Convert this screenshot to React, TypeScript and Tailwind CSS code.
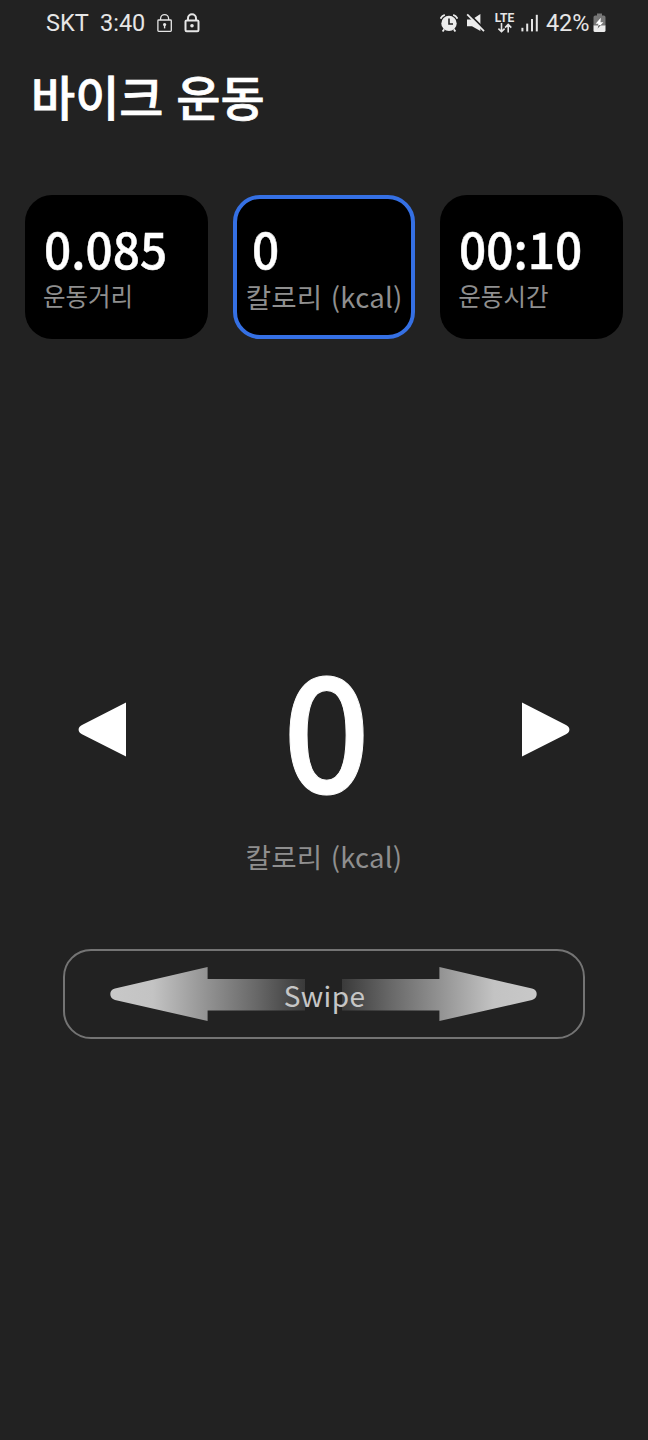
import React from "react";

type Metric = { value: string; label: string; active?: boolean };

const metrics: Metric[] = [
  { value: "0.085", label: "운동거리" },
  { value: "0", label: "칼로리 (kcal)", active: true },
  { value: "00:10", label: "운동시간" },
];

function StatusBar() {
  return (
    <header className="flex h-[46px] shrink-0 items-center justify-between pl-[46px] pr-[42px] font-['Roboto',sans-serif] text-[23.5px] leading-[46px] text-[#e6e6e6]">
      <div className="flex items-center">
        <span className="w-[54px]">SKT</span>
        <span className="w-[57px]">3:40</span>
        <svg className="h-[20px] w-[16px]" viewBox="0 0 16 20" fill="none" stroke="#e6e6e6" strokeWidth="1.3">
          <rect x="0.9" y="7" width="13.4" height="11.3" rx="0.8" />
          <path d="M3.6 7V5.6a4 4 0 0 1 8 0V7" />
          <circle cx="7.6" cy="11.5" r="1.6" fill="#e6e6e6" stroke="none" />
          <path d="M7.6 12v3.4" strokeWidth="1.4" />
        </svg>
        <svg className="ml-[11px] h-[20px] w-[17px]" viewBox="0 0 17 20" fill="none" stroke="#e6e6e6" strokeWidth="2">
          <rect x="1.5" y="7.4" width="13" height="10.8" rx="1.2" />
          <path d="M4 7.4V5.2a4 4 0 0 1 8 0v2.2" />
          <circle cx="8" cy="12.7" r="1.8" fill="#e6e6e6" stroke="none" />
        </svg>
      </div>
      <div className="flex items-center">
        <svg className="h-[20px] w-[18px]" viewBox="0 0 18 20">
          <circle cx="9" cy="10.4" r="7.7" fill="#ececec" />
          <path d="M.6 5.6Q1.6 2.8 4.8 1.8M17.4 5.6Q16.4 2.8 13.2 1.8M4.2 16.2 2.6 18.5M13.8 16.2 15.4 18.5" fill="none" stroke="#ececec" strokeWidth="1.8" />
          <path d="M9 5.6v5.4h4" fill="none" stroke="#222" strokeWidth="1.6" />
        </svg>
        <svg className="ml-[8px] h-[20px] w-[20px]" viewBox="0 0 20 20">
          <path d="M1 6.6h5L14.4 1v17L6 13.2H1z" fill="#ececec" />
          <path d="M2.4 0.2 19.6 17.4" stroke="#222" strokeWidth="2" />
          <path d="M1.2 1.4 18 18.2" stroke="#ececec" strokeWidth="1.8" />
        </svg>
        <div className="ml-[8px] flex w-[21px] flex-col items-center">
          <span className="text-[12px] font-bold leading-[10px]">LTE</span>
          <svg className="h-[10px] w-[16px]" viewBox="0 0 16 10" fill="none" stroke="#e6e6e6" strokeWidth="1.6">
            <path d="M4.5 0v8.6M1.4 5.6l3.1 3.1 3.1-3.1M11.2 9.6V1.6M8.1 4.6l3.1-3.1 3.1 3.1" />
          </svg>
        </div>
        <svg className="ml-[6px] h-[18px] w-[18px]" viewBox="0 0 18 18" fill="#e6e6e6">
          <rect x="0.4" y="13.8" width="2" height="3.6" />
          <rect x="5.2" y="9.6" width="2" height="7.8" />
          <rect x="10" y="5" width="2" height="12.4" />
          <rect x="14.8" y="0.8" width="2" height="16.6" />
        </svg>
        <span className="ml-[7px] w-[47px] tracking-[-0.1px]">42%</span>
        <svg className="h-[20px] w-[13px]" viewBox="0 0 13 20">
          <path d="M4 0.6h5v2h1.8q1.7 0 1.7 1.7V13H0.5V4.3q0-1.7 1.7-1.7H4z" fill="#777" />
          <path d="M0.5 12.5h12v5q0 1.6-1.6 1.6H2.1q-1.6 0-1.6-1.6z" fill="#ececec" />
          <path d="M7.8 4.8 2.6 10.8h2.8L4.4 15.6l6-6.3H7.5z" fill="#fff" />
          <path d="M5.6 12.3 4.6 15.4 7.7 12.3" fill="#444" />
        </svg>
      </div>
    </header>
  );
}

function MetricCard({ value, label, active }: Metric) {
  return (
    <div
      className={
        active
          ? "h-[144px] rounded-[27px] border-4 border-[#3570e4] bg-black pl-[9px] pt-[23px]"
          : "h-[144px] rounded-[27px] bg-black pl-[18px] pt-[27px]"
      }
    >
      <div
        className={
          active
            ? "ml-[6px] h-[59px] origin-left scale-x-[0.955] text-[50px] font-medium leading-[50px] text-white [-webkit-text-stroke:0.5px_white]"
            : "ml-[1px] h-[59px] origin-left scale-x-[0.955] text-[50px] font-medium leading-[50px] text-white [-webkit-text-stroke:0.5px_white]"
        }
      >
        {value}
      </div>
      <div className={active ? "whitespace-nowrap text-[27.6px] leading-[30px] tracking-[0.2px] text-[#8f8f8f] [word-spacing:2px]" : "whitespace-nowrap text-[24.5px] leading-[30px] text-[#8f8f8f]"}>
        {label}
      </div>
    </div>
  );
}

function Triangle({ flip }: { flip?: boolean }) {
  return (
    <svg className={flip ? "h-[56px] w-[48px] -scale-x-100" : "h-[56px] w-[48px]"} viewBox="0 0 48 56" fill="#fff">
      <path d="M48 .6V54.6L4 32.2Q.6 30.6 .6 27.6T4 23Z" />
    </svg>
  );
}

function SwipeArrow({ id, flip }: { id: string; flip?: boolean }) {
  return (
    <svg className={flip ? "h-[56px] w-[195px] -scale-x-100" : "h-[56px] w-[195px]"} viewBox="0 0 195 56">
      <defs>
        <linearGradient id={id} x1="0" x2="195" y1="0" y2="0" gradientUnits="userSpaceOnUse">
          <stop offset="0" stopColor="#c8c8c8" />
          <stop offset="0.22" stopColor="#c3c3c3" />
          <stop offset="0.5" stopColor="#929292" />
          <stop offset="0.75" stopColor="#686868" />
          <stop offset="1" stopColor="#3a3a3a" />
        </linearGradient>
      </defs>
      <path d="M97.6 1V13H195V44.5H97.6V55L5 34Q.3 32.5 .3 28T5 22.5Z" fill={`url(#${id})`} />
    </svg>
  );
}

export default function App() {
  return (
    <main className="flex h-[1440px] w-[648px] flex-col overflow-hidden bg-[#222222] font-['Noto_Sans_CJK_KR',sans-serif]">
      <StatusBar />
      <h1 className="mt-[25px] pl-[31px] text-[48px] font-medium leading-[48px] text-white [-webkit-text-stroke:0.7px_white] [word-spacing:2px]">바이크 운동</h1>
      <section className="mt-[76px] grid grid-cols-3 gap-[25px] px-[25px]">
        {metrics.map((m) => (
          <MetricCard key={m.label} {...m} />
        ))}
      </section>
      <section className="mt-[304px] flex h-[160px] items-center justify-between px-[78px]">
        <div className="pt-[14px]">
          <Triangle />
        </div>
        <div className="ml-[5px] scale-x-[0.96] text-[160px] font-medium leading-[160px] text-white [-webkit-text-stroke:1px_white]">0</div>
        <div className="pt-[14px]">
          <Triangle flip />
        </div>
      </section>
      <div className="mt-[38px] text-center text-[27.6px] leading-[30px] tracking-[0.2px] text-[#8f8f8f] [word-spacing:2px]">칼로리 (kcal)</div>
      <section className="relative mx-[63px] mt-[78px] flex h-[90px] items-center justify-between rounded-[28px] border-2 border-[#747474] pl-[45px] pr-[46px]">
        <SwipeArrow id="swipe-left" />
        <SwipeArrow id="swipe-right" flip />
        <span className="absolute inset-0 pl-px text-center text-[28px] leading-[88px] tracking-[0.4px] text-[#c6c6c6]">Swipe</span>
      </section>
    </main>
  );
}
